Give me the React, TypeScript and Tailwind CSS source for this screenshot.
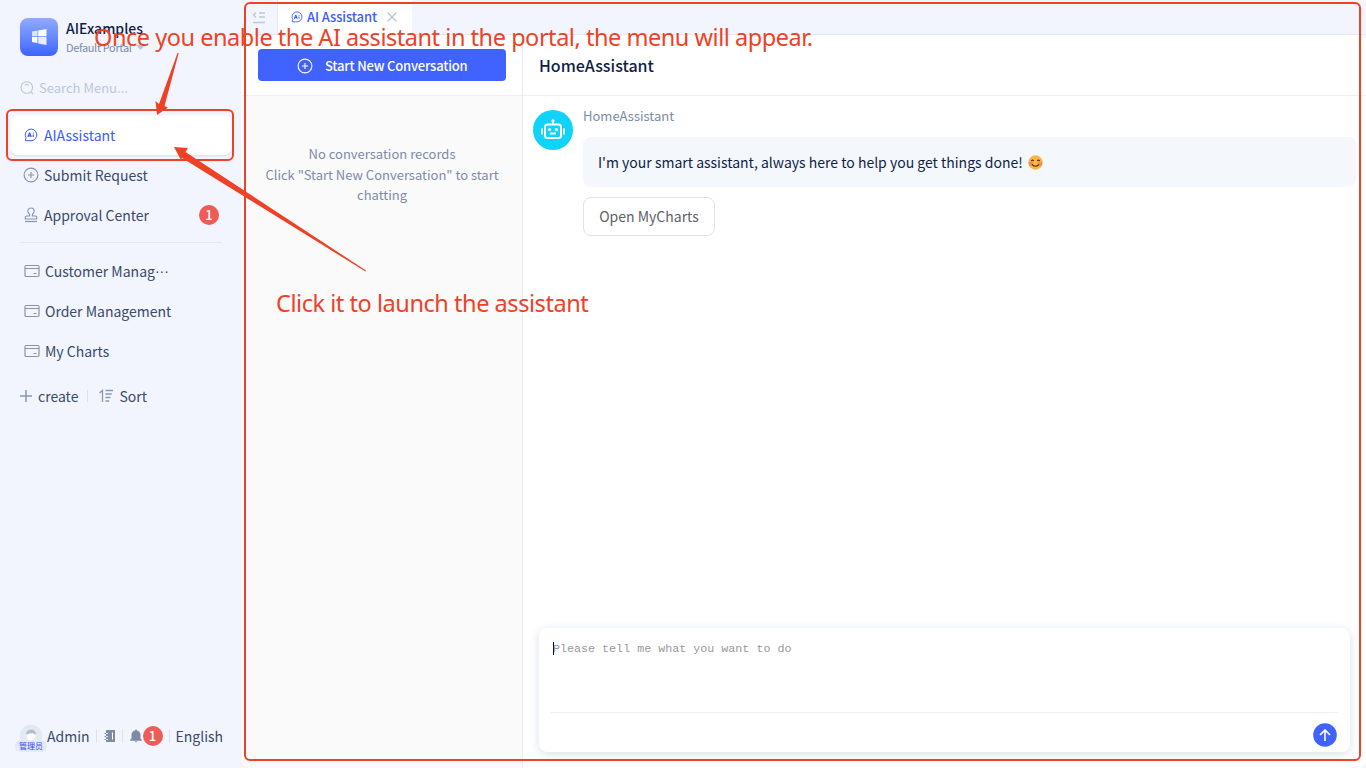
import React from "react";

const Ai = ({ s = 14 }: { s?: number }) => (
  <svg width={s} height={s} viewBox="0 0 14 14" fill="none" stroke="currentColor" className="shrink-0">
    <path d="M1.400 12.700h5.800A5.800 5.800 0 1 0 2 9.800z" strokeWidth="1" strokeLinejoin="round" />
    <path d="M3.900 9l1.500-4h.4l1.500 4M4.400 7.900h2.400M9.300 6.400V9M9.300 4.700v.9" strokeWidth="1.200" />
  </svg>
);

const PlusCircle = () => (
  <svg width="16" height="16" viewBox="0 0 16 16" fill="none" stroke="currentColor" className="shrink-0">
    <circle cx="8" cy="8" r="6.900" strokeWidth="1.100" />
    <path d="M8 5v6M5 8h6" strokeWidth="1.100" />
  </svg>
);

const Stamp = () => (
  <svg width="14" height="16" viewBox="0 0 14 16" fill="none" stroke="currentColor" className="shrink-0">
    <path d="M5.600 9V7.200C4.500 6.300 3.800 5.400 3.800 4.200a3.200 3.200 0 0 1 6.400 0c0 1.200-.7 2.100-1.800 3V9h3a1.300 1.300 0 0 1 1.300 1.300V12H1.300v-1.700A1.300 1.300 0 0 1 2.600 9z" strokeWidth="1.100" />
    <path d="M1 14.500h12" strokeWidth="1.200" />
  </svg>
);

const Card = () => (
  <svg width="16" height="14" viewBox="0 0 16 14" fill="none" stroke="#8f9399" className="shrink-0">
    <rect x="1" y="1.500" width="14" height="11" rx="1.200" strokeWidth="1.200" />
    <path d="M1 4.500h14M9.500 9.500h3" strokeWidth="1.200" />
  </svg>
);

const Badge = () => (
  <span className="flex size-5 shrink-0 items-center justify-center rounded-full bg-[#ef5b56] text-[13px] font-medium leading-5 text-white">1</span>
);

const items = [
  { name: "Customer Manag", cut: true },
  { name: "Order Management", cut: false },
  { name: "My Charts", cut: false },
];

function Sidebar() {
  return (
    <aside className="flex h-full w-[242px] shrink-0 flex-col text-[14px] text-[#3a4a6b]">
      <div className="flex h-[56px] items-end pl-5">
        <div className="flex size-[38px] items-center justify-center rounded-lg bg-linear-to-b from-[#93abff] to-[#3d63fd]">
          <svg width="16" height="18" viewBox="0 0 16 18" fill="#fff">
            <path d="M1 3.400l5.500-.8v5.700H1z" opacity=".75" />
            <path d="M7.200 2.500L15.500 1v7.300H7.200z" />
            <path d="M1 9h5.500v5.900L1 14z" />
            <path d="M7.200 9h8.300v8l-8.300-1.500z" opacity=".85" />
          </svg>
        </div>
        <div className="ml-2 flex h-[38px] flex-col whitespace-nowrap">
          <div className="h-[20px] text-[14px] font-medium leading-[21px] text-[#101f46]">AIExamples</div>
          <div className="flex h-[18px] items-center text-[11px] leading-5 tracking-[-0.350px] text-[#7d8ba6]">
            Default Portal
            <svg width="9" height="6" viewBox="0 0 9 6" className="ml-1" fill="#bac5d9"><path d="M0 1h9L4.500 6z" /></svg>
          </div>
        </div>
      </div>
      <div className="mt-[22px] flex h-5 items-center gap-[5px] pl-5 text-[13px] text-[#bcc6da]">
        <svg width="14" height="14" viewBox="0 0 14 14" fill="none" stroke="currentColor" strokeWidth="1.100">
          <circle cx="6.800" cy="6.500" r="5.800" /><path d="M4.800 4.200a3.500 3.500 0 0 1 4 0M11 11l2 2" />
        </svg>
        Search Menu...
      </div>
      <div className="ml-[10px] mt-[17px] flex h-10 w-[222px] items-center rounded-lg bg-white pl-[14px] text-[#3d5cff] shadow-[0_1px_2px_rgba(60,80,130,0.15)]">
        <Ai /><span className="ml-[6px]">AIAssistant</span>
      </div>
      <div className="flex h-10 items-center pl-[23px]">
        <span className="text-[#8492b0]"><PlusCircle /></span><span className="ml-[5px]">Submit Request</span>
      </div>
      <div className="flex h-10 items-center pl-6">
        <span className="text-[#8492b0]"><Stamp /></span><span className="ml-[6px] flex-1">Approval Center</span>
        <span className="mr-[23px]"><Badge /></span>
      </div>
      <div className="mx-5 mb-2 mt-[7px] h-px bg-[#e3e7f0]" />
      {items.map((t) => (
        <div key={t.name} className="flex h-10 items-center pl-6">
          <Card /><span className="ml-[5px]">{t.name}</span>
          {t.cut && <span className="font-['Liberation_Sans',sans-serif]">···</span>}
        </div>
      ))}
      <div className="mt-[15px] flex h-5 items-center pl-5">
        <svg width="12" height="12" viewBox="0 0 12 12" stroke="#8797b5" strokeWidth="1.500"><path d="M6 0v12M0 6h12" /></svg>
        <span className="ml-[6px]">create</span>
        <span className="ml-[9px] h-3 w-px bg-[#dde3ee]" />
        <svg width="15" height="14" viewBox="0 0 15 14" fill="none" stroke="#8797b5" strokeWidth="1.300" className="ml-[11px]">
          <path d="M.5 4l3-2.500V13M6.500 1.500H14M6.500 5h6.200M6.500 8.500h5M6.500 12h3.700" />
        </svg>
        <span className="ml-[5px]">Sort</span>
      </div>
      <div className="mb-4 mt-auto flex h-8 items-center pl-[17px]">
        <div className="relative h-8 w-[30px]">
          <svg width="24" height="24" viewBox="0 0 24 24" className="ml-[2px] mt-[4px]">
            <circle cx="12" cy="12" r="11.300" fill="#e3e9f2" />
            <circle cx="12" cy="11.500" r="4.600" fill="#fff" />
            <path d="M7 10.500a5 5 0 0 1 10 0c-2 0-2.500-1.200-3.200-1.200L10 9.500c-1 .9-1.500 1-3 1z" fill="#b0bbcb" />
            <path d="M7.500 19a4.500 4.500 0 0 1 9 0z" fill="#fff" />
          </svg>
          <span className="absolute -left-[2px] top-5 flex h-3 w-8 items-center justify-center whitespace-nowrap rounded-full bg-[#e4e9fd] text-[8px] leading-3 text-[#3547f5]">管理员</span>
        </div>
        <span className="pt-px">Admin</span>
        <span className="ml-[6px] h-[14px] w-px bg-[#dde3ee]" />
        <svg width="12" height="14" viewBox="0 0 12 14" className="ml-[7px]" fill="#7b8ba8">
          <path d="M2 1h9v12H2v-2H.5v-1H2V8H.5V7H2V5H.5V4H2z" /><path d="M8.500 3.500v7" stroke="#fff" /><path d="M2 4.500h2M2 7.500h2M2 10.500h2" stroke="#fff" strokeWidth=".8" />
        </svg>
        <span className="ml-[6px] h-[14px] w-px bg-[#dde3ee]" />
        <svg width="14" height="14" viewBox="0 0 14 14" className="ml-[6px]" fill="#7b8ba8">
          <path d="M6.300.5h1.400v1C10.500 1.900 11.500 4 11.500 6v3.500L13 11v.7H1V11l1.500-1.500V6c0-2 1-4.100 3.800-4.500zM5.500 12.300h3L7 13.600z" />
        </svg>
        <Badge />
        <span className="ml-[6px] h-[14px] w-px bg-[#dde3ee]" />
        <span className="ml-[6px] pt-px">English</span>
      </div>
    </aside>
  );
}

function Conversations() {
  return (
    <section className="flex w-[281px] shrink-0 flex-col border-r border-[#e9ebf2] bg-[#fafafa]">
      <div className="h-[61px] border-b border-[#eeeff3] bg-white pl-4 pt-[14px]">
        <div className="flex h-8 w-[248px] items-center rounded bg-[#4062ff] pl-[39px] pt-px text-[13px] font-medium text-white">
          <PlusCircle /><span className="ml-3 whitespace-nowrap tracking-[-0.180px]">Start New Conversation</span>
        </div>
      </div>
      <div className="mt-[48px] px-4 text-center text-[13px] leading-[20.500px] text-[#7e8ba6]">
        <div>No conversation records</div>
        <div className="whitespace-nowrap">Click "Start New Conversation" to start</div>
        <div>chatting</div>
      </div>
    </section>
  );
}

function Chat() {
  return (
    <section className="flex min-w-0 flex-1 flex-col bg-white">
      <div className="flex h-[61px] items-center border-b border-[#eeeff3] pl-4 text-[16px] font-medium text-[#101f46]">HomeAssistant</div>
      <div className="flex pl-[10px] pr-[10px] pt-[14px]">
        <div className="flex size-10 shrink-0 items-center justify-center rounded-full bg-[#10d3fb]">
          <svg width="26" height="24" viewBox="0 0 26 24" fill="none" stroke="#fff" strokeWidth="2">
            <rect x="5" y="6.500" width="16" height="13.500" rx="2.500" />
            <path d="M13 3v4M2 10.500v6M24 10.500v6M10 15.500h6" />
            <circle cx="13" cy="2.800" r="1.600" fill="#fff" stroke="none" />
            <circle cx="9.700" cy="11.500" r="1.600" fill="#fff" stroke="none" /><circle cx="16.300" cy="11.500" r="1.600" fill="#fff" stroke="none" />
          </svg>
        </div>
        <div className="ml-[10px] flex-1">
          <div className="h-[27px] text-[13px] leading-[12px] text-[#7e8ba6]">HomeAssistant</div>
          <div className="flex h-[50px] items-center rounded-lg bg-[#f4f7fc] pl-[15px] pt-px text-[14px] text-[#101f46]">
            I'm your smart assistant, always here to help you get things done!
            <svg width="15" height="15" viewBox="0 0 15 15" className="ml-[5px]">
              <circle cx="7.500" cy="7.500" r="7.200" fill="#fbb642" />
              <circle cx="3" cy="8.800" r="2.200" fill="#f58b50" /><circle cx="12" cy="8.800" r="2.200" fill="#f58b50" />
              <path d="M3.200 6q1.300-1.800 2.600 0M9.200 6q1.300-1.800 2.600 0M4 9.500q3.500 3.600 7 0" stroke="#513126" fill="none" strokeWidth="1.100" />
            </svg>
          </div>
          <div className="mt-[10px] flex h-[39px] w-[132px] items-center justify-center rounded-lg border border-[#dfe2ec] text-[14px] text-[#606266]">Open MyCharts</div>
        </div>
      </div>
      <div className="mb-4 ml-4 mr-4 mt-auto flex h-[124px] flex-col rounded-lg bg-white px-3 shadow-[0_2px_10px_rgba(70,90,140,0.2)]">
        <div className="flex h-[85px] border-b border-[#eceef3] pl-[2px] pt-[14px]">
          <span className="h-[13px] w-px bg-black" />
          <span className="-ml-px -mt-px h-4 whitespace-nowrap font-['Liberation_Mono',monospace] text-[11.700px] leading-4 text-[#999]">Please tell me what you want to do</span>
        </div>
        <div className="flex flex-1 items-center justify-end pr-px pt-1">
          <svg width="24" height="24" viewBox="0 0 24 24"><circle cx="12" cy="12" r="11.800" fill="#4062ff" /><path d="M12 18V7.500M7 12l5-5 5 5" fill="none" stroke="#fff" strokeWidth="1.600" /></svg>
        </div>
      </div>
    </section>
  );
}

export default function App() {
  return (
    <div className="relative flex h-[768px] w-[1366px] overflow-hidden bg-[#f2f5fd] font-['Noto_Sans_CJK_SC',sans-serif]">
      <Sidebar />
      <main className="flex min-w-0 flex-1 flex-col">
        <div className="flex h-[35px] shrink-0 border-b border-[#e5e9f5]">
          <div className="flex w-9 items-center justify-center border-r border-[#e8ebf5] pr-[2px] text-[#bdc6da]">
            <svg width="14" height="13" viewBox="0 0 14 13" fill="none" stroke="currentColor" strokeWidth="1.300"><path d="M4 1.500L1.500 4 4 6.500M7 2h6M7 6h6M1 11.500h12" /></svg>
          </div>
          <div className="flex h-[35px] w-[134px] items-center bg-white pb-px pl-[13px] text-[13px] font-medium text-[#3d5cff]">
            <Ai s={12} /><span className="ml-1 tracking-[-0.100px]">AI Assistant</span>
            <svg width="10" height="10" viewBox="0 0 10 10" stroke="#b9c2d4" strokeWidth="1.200" className="ml-[10px]"><path d="M.5.500l9 9M9.500.500l-9 9" /></svg>
          </div>
        </div>
        <div className="flex min-h-0 flex-1 overflow-hidden rounded-bl-lg rounded-r-lg">
          <Conversations />
          <Chat />
        </div>
      </main>
      <div className="absolute left-[6px] top-[109px] h-[52px] w-[228px] rounded-md border-2 border-[#ee4126]" />
      <div className="absolute left-[244px] top-[2px] h-[759px] w-[1117px] rounded-md border-2 border-[#ee4126]" />
      <svg width="400" height="280" viewBox="0 0 400 280" className="absolute left-0 top-0" fill="#ee4126">
        <path d="M177.500 53h1.200L164.500 106l3.500 1.500-11 7.500-1.500-14 3.500 3z" />
        <path d="M366 270.500l-.5 1L182 158l-1 2-7-13 14 1-2.500 4z" />
      </svg>
      <div className="absolute left-[94px] top-[21px] whitespace-nowrap font-['Noto_Sans',sans-serif] text-[23.500px] leading-8 tracking-[-0.460px] text-[#ee4126]">Once you enable the AI assistant in the portal, the menu will appear.</div>
      <div className="absolute left-[276px] top-[287px] whitespace-nowrap font-['Noto_Sans',sans-serif] text-[23.500px] leading-8 tracking-[-0.450px] text-[#ee4126]">Click it to launch the assistant</div>
    </div>
  );
}
